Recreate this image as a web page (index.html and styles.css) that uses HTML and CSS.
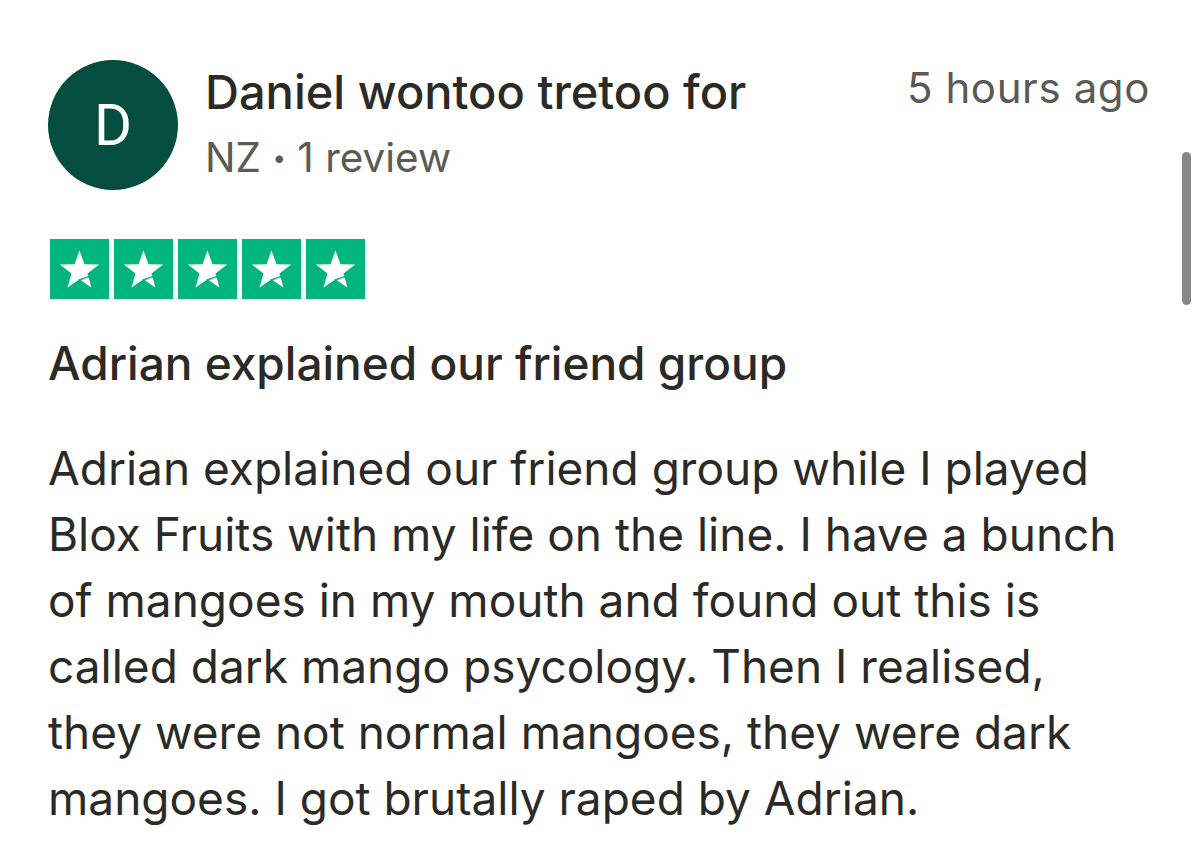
FILE: index.html
```html
<!DOCTYPE html>
<html lang="en">
<head>
    <meta charset="UTF-8">
    <title>Review</title>
    <link rel="stylesheet" href="styles.css">
</head>
<body>
    <div class="review">
        <div class="header">
            <div class="avatar">D</div>
            <div class="who">
                <div class="name">Daniel wontoo tretoo for</div>
                <div class="meta">NZ <span class="dot">•</span> 1 review</div>
            </div>
            <div class="time">5 hours ago</div>
        </div>

        <div class="stars">
            <div class="star"><svg viewBox="0 0 60 60"><polygon points="30,11 35,25.1 50,25.5 38.1,34.6 42.3,49 30,40.5 17.7,49 21.9,34.6 10,25.5 25,25.1"/><line x1="29" y1="41.5" x2="40" y2="37.5"/></svg></div>
            <div class="star"><svg viewBox="0 0 60 60"><polygon points="30,11 35,25.1 50,25.5 38.1,34.6 42.3,49 30,40.5 17.7,49 21.9,34.6 10,25.5 25,25.1"/><line x1="29" y1="41.5" x2="40" y2="37.5"/></svg></div>
            <div class="star"><svg viewBox="0 0 60 60"><polygon points="30,11 35,25.1 50,25.5 38.1,34.6 42.3,49 30,40.5 17.7,49 21.9,34.6 10,25.5 25,25.1"/><line x1="29" y1="41.5" x2="40" y2="37.5"/></svg></div>
            <div class="star"><svg viewBox="0 0 60 60"><polygon points="30,11 35,25.1 50,25.5 38.1,34.6 42.3,49 30,40.5 17.7,49 21.9,34.6 10,25.5 25,25.1"/><line x1="29" y1="41.5" x2="40" y2="37.5"/></svg></div>
            <div class="star"><svg viewBox="0 0 60 60"><polygon points="30,11 35,25.1 50,25.5 38.1,34.6 42.3,49 30,40.5 17.7,49 21.9,34.6 10,25.5 25,25.1"/><line x1="29" y1="41.5" x2="40" y2="37.5"/></svg></div>
        </div>

        <h2 class="title">Adrian explained our friend group</h2>

        <p class="text">Adrian explained our friend group while I played Blox Fruits with my life on the line. I have a bunch of mangoes in my mouth and found out this is called dark mango psycology. Then I realised, they were not normal mangoes, they were dark mangoes. I got brutally raped by Adrian.</p>
    </div>

    <div class="scrollbar"></div>
</body>
</html>
```

FILE: styles.css
```css
body {
    margin: 0;
    background: #fff;
    font-family: Inter, 'Noto Sans', sans-serif;
    color: #2b2a26;
    overflow: hidden;
}
.review {
    padding: 60px 50px 0 48px;
}
.header {
    display: flex;
    align-items: flex-start;
}
.avatar {
    width: 130px;
    height: 130px;
    border-radius: 50%;
    background: #054d3e;
    color: #fff;
    font-family: Roboto, sans-serif;
    font-weight: 400;
    font-size: 58px;
    display: flex;
    justify-content: center;
    align-items: center;
    flex-shrink: 0;
}
.who {
    margin-left: 27px;
}
.name {
    font-size: 47px;
    font-weight: 500;
    line-height: 56px;
    margin-top: 4px;
}
.meta {
    font-size: 40.5px;
    color: #5b5a55;
    line-height: 50px;
    margin-top: 13px;
}
.dot {
    font-size: 24px;
    vertical-align: 6px;
}
.time {
    margin-left: auto;
    font-size: 42px;
    letter-spacing: 0.6px;
    color: #5b5a55;
    line-height: 56px;
}
.stars {
    display: flex;
    gap: 5px;
    margin: 49px 0 0 2px;
}
.star {
    width: 59px;
    height: 60px;
    background: #00b67a;
}
.star svg {
    display: block;
    width: 59px;
    height: 60px;
}
.star polygon {
    fill: #fff;
}
.star line {
    stroke: #00b67a;
    stroke-width: 1.6;
}
.title {
    font-size: 46px;
    font-weight: 500;
    line-height: 56px;
    margin: 36px 0 0;
}
.text {
    font-size: 46px;
    line-height: 66px;
    margin: 44px 0 0;
}
.scrollbar {
    position: absolute;
    left: 1182px;
    top: 152px;
    width: 9px;
    height: 153px;
    border-radius: 5px;
    background: #888;
}
```
